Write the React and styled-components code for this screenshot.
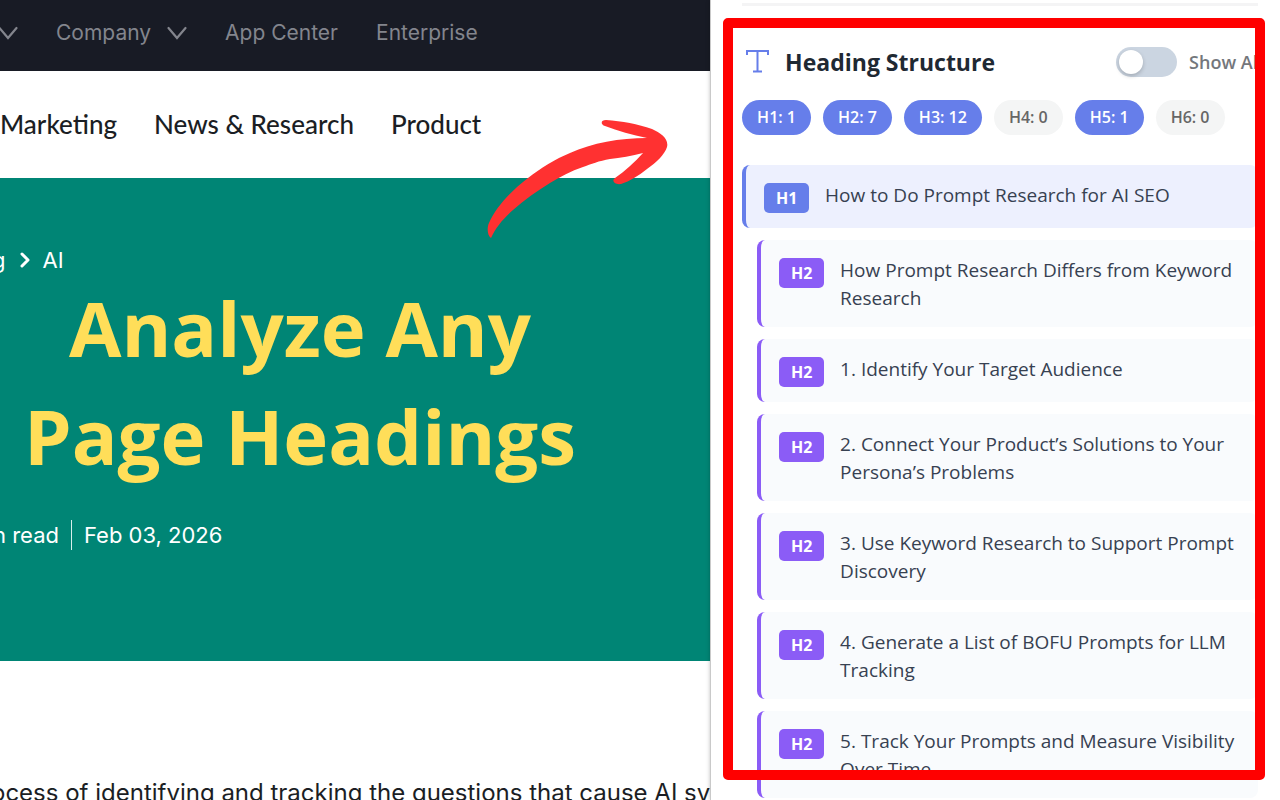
import React, { useState } from 'react';
import styled, { createGlobalStyle } from 'styled-components';

const GlobalStyle = createGlobalStyle`
  * {
    box-sizing: border-box;
  }

  body {
    margin: 0;
    background: #ffffff;
    font-family: Inter, sans-serif;
  }

  h1, h2, p, ul {
    margin: 0;
    padding: 0;
  }

  ul {
    list-style: none;
  }
`;

const Page = styled.div`
  display: grid;
  grid-template-columns: minmax(0, 5fr) minmax(0, 4fr);
  height: 100vh;
  overflow: hidden;
`;

const Article = styled.div`
  position: relative;
  overflow: hidden;
  white-space: nowrap;
`;

const TopBar = styled.nav`
  display: flex;
  align-items: center;
  gap: 38px;
  height: 71px;
  margin-left: -2px;
  padding-bottom: 5px;
  background: #181b25;
`;

const TopLink = styled.a`
  display: flex;
  align-items: center;
  gap: 16px;
  color: #83858d;
  font-size: 21px;
  line-height: 28px;
  text-decoration: none;
`;

const Categories = styled.nav`
  display: flex;
  align-items: center;
  gap: 37px;
  height: 107px;
  padding-bottom: 2px;
`;

const CategoryLink = styled.a`
  color: #1b1e24;
  font-family: Lato, sans-serif;
  font-size: 26px;
  font-weight: 500;
  line-height: 32px;
  text-decoration: none;
`;

const Hero = styled.header`
  height: 483px;
  padding-top: 67px;
  background: #008575;
  color: #ffffff;
`;

const Breadcrumb = styled.div`
  display: flex;
  align-items: center;
  gap: 12px;
  height: 29px;
  margin-left: -8px;
  font-size: 22px;
`;

const Crumb = styled.a`
  color: inherit;
  text-decoration: none;
`;

const Headline = styled.h1`
  width: 600px;
  color: #ffde59;
  font-family: "Open Sans", sans-serif;
  font-size: 76px;
  font-weight: 700;
  line-height: 108px;
  text-align: center;
`;

const Meta = styled.div`
  display: flex;
  align-items: center;
  height: 32px;
  margin: 29px 0 0 -7px;
  font-size: 22px;
`;

const MetaItem = styled.span`
  & + & {
    margin-left: 12px;
    padding-left: 12px;
    border-left: 1px solid #d9efec;
    line-height: 30px;
  }
`;

const Paragraph = styled.p`
  margin: 115px 0 0 -9px;
  color: #1b1e24;
  font-size: 24px;
  line-height: 34px;
`;

const Arrow = styled.svg`
  position: absolute;
  top: 118px;
  left: 486px;
  width: 184px;
  height: 122px;
`;

const Panel = styled.aside`
  position: relative;
  overflow: hidden;
  margin-left: -1px;
  padding: 3px 22px 0 31px;
  border-left: 1px solid #c9c9c9;
  background: #ffffff;
  box-shadow: 0 0 4px rgba(0, 0, 0, 0.25);
  font-family: "Open Sans", sans-serif;
`;

const Divider = styled.hr`
  height: 3px;
  margin: 0;
  border: 0;
  background: #f4f4f5;
`;

const PanelHeader = styled.div`
  display: flex;
  align-items: center;
  height: 34px;
  margin-top: 39px;
  white-space: nowrap;
`;

const PanelTitle = styled.h2`
  display: flex;
  flex: 0 0 374px;
  align-items: center;
  gap: 13px;
  color: #1f2933;
  font-size: 23px;
  font-weight: 700;
`;

const ToggleLabel = styled.label`
  display: flex;
  align-items: center;
  gap: 12px;
  color: #74777c;
  font-size: 18px;
  font-weight: 600;
`;

const Toggle = styled.input`
  flex: none;
  width: 61px;
  height: 30px;
  margin: 0;
  padding: 3px;
  border-radius: 15px;
  appearance: none;
  background: ${(props) => (props.checked ? '#667eea' : '#cbd5e1')};

  &::before {
    content: '';
    display: block;
    width: 24px;
    height: 24px;
    margin-left: ${(props) => (props.checked ? '31px' : '0')};
    border-radius: 50%;
    background: #ffffff;
    box-shadow: 0 2px 4px rgba(0, 0, 0, 0.2);
  }
`;

const Chips = styled.ul`
  display: flex;
  gap: 12px;
  margin-top: 21px;
`;

const Chip = styled.li`
  padding: 0 15px;
  border-radius: 18px;
  background: ${(props) => (props.$active ? '#667eea' : '#f4f5f5')};
  color: ${(props) => (props.$active ? '#ffffff' : '#666666')};
  font-size: 16px;
  font-weight: 600;
  line-height: 35px;
  white-space: nowrap;
`;

const HeadingList = styled.ul`
  display: flex;
  flex-direction: column;
  gap: 12px;
  margin-top: 30px;
`;

const HeadingItem = styled.li`
  display: flex;
  align-items: flex-start;
  gap: 16px;
  margin-left: ${(props) => (props.$level - 1) * 15}px;
  padding: 16px 18px 15px;
  border-left: 4px solid ${(props) => (props.$level === 1 ? '#667eea' : '#8b5cf6')};
  border-radius: 8px;
  background: ${(props) => (props.$level === 1 ? '#edf0fe' : '#f9fbfd')};
`;

const Badge = styled.span`
  flex: none;
  width: 45px;
  margin-top: 2px;
  border-radius: 5px;
  background: ${(props) => (props.$level === 1 ? '#667eea' : '#8b5cf6')};
  color: #ffffff;
  font-size: 16px;
  font-weight: 700;
  line-height: 30px;
  text-align: center;
`;

const HeadingText = styled.span`
  color: #374151;
  font-size: 19px;
  line-height: 28px;
`;

const Highlight = styled.div`
  position: absolute;
  inset: 18px 15px 20px 12px;
  border: 10px solid #ff0000;
  border-radius: 5px;
  pointer-events: none;
`;

const counts = [
  { tag: 'H1', count: 1 },
  { tag: 'H2', count: 7 },
  { tag: 'H3', count: 12 },
  { tag: 'H4', count: 0 },
  { tag: 'H5', count: 1 },
  { tag: 'H6', count: 0 }
];

const headings = [
  { level: 1, text: 'How to Do Prompt Research for AI SEO' },
  { level: 2, text: 'How Prompt Research Differs from Keyword Research' },
  { level: 2, text: '1. Identify Your Target Audience' },
  { level: 2, text: '2. Connect Your Product’s Solutions to Your Persona’s Problems' },
  { level: 2, text: '3. Use Keyword Research to Support Prompt Discovery' },
  { level: 2, text: '4. Generate a List of BOFU Prompts for LLM Tracking' },
  { level: 2, text: '5. Track Your Prompts and Measure Visibility Over Time' }
];

const ChevronDown = () => (
  <svg width="20" height="14" viewBox="0 0 20 14" fill="none" stroke="#83858d" strokeWidth="2.2">
    <path d="M1.500 2 L10 12 L18.500 2" strokeLinecap="round" />
  </svg>
);

const ChevronRight = () => (
  <svg width="13" height="16" viewBox="0 0 13 16" fill="none" stroke="#ffffff" strokeWidth="3">
    <path d="M4 2 L10 8 L4 14" strokeLinecap="round" strokeLinejoin="round" />
  </svg>
);

const TypeIcon = () => (
  <svg width="30" height="26" viewBox="0 0 30 26" fill="none" stroke="#667eea" strokeWidth="2">
    <path d="M5 6 V2 H26 V6 M15.500 2 V22 M11 22.500 H20" />
  </svg>
);

const App = () => {
  const [showAll, setShowAll] = useState(false);

  return (
    <>
      <GlobalStyle />
      <Page>
        <Article>
          <TopBar>
            <TopLink href="#menu" aria-label="Menu"><ChevronDown /></TopLink>
            <TopLink href="#company">Company <ChevronDown /></TopLink>
            <TopLink href="#apps">App Center</TopLink>
            <TopLink href="#enterprise">Enterprise</TopLink>
          </TopBar>
          <Categories>
            <CategoryLink href="#marketing">Marketing</CategoryLink>
            <CategoryLink href="#news">News &amp; Research</CategoryLink>
            <CategoryLink href="#product">Product</CategoryLink>
          </Categories>
          <Hero>
            <Breadcrumb>
              <Crumb href="#blog">g</Crumb>
              <ChevronRight />
              <Crumb href="#ai">AI</Crumb>
            </Breadcrumb>
            <Headline>
              Analyze Any
              <br />
              Page Headings
            </Headline>
            <Meta>
              <MetaItem>n read</MetaItem>
              <MetaItem>Feb 03, 2026</MetaItem>
            </Meta>
          </Hero>
          <Paragraph>ocess of identifying and tracking the questions that cause AI sy</Paragraph>
          <Arrow viewBox="486 118 184 122" fill="#ff3131">
            <path d="M491 238 C487 235 487 227 489 223 C496 207 511 191 528 178 C541 168 555 159 570 153 C592 143 620 138 647 138 C632 135 618 131 605 126 C600 124 601 120 606 120 C622 121 638 124 652 129 C661 133 669 139 667 147 C665 154 656 163 647 169 C638 176 630 181 621 184 C615 185 611 181 615 178 C625 171 635 162 643 153 C632 156 620 158 610 159 C599 161 591 164 583 167 C571 171 560 177 550 183 C537 191 524 200 513 210 C503 219 496 227 491 238 Z" />
          </Arrow>
        </Article>
        <Panel>
          <Divider />
          <PanelHeader>
            <PanelTitle><TypeIcon />Heading Structure</PanelTitle>
            <ToggleLabel>
              <Toggle
                type="checkbox"
                checked={showAll}
                onChange={() => setShowAll(!showAll)}
              />
              Show All
            </ToggleLabel>
          </PanelHeader>
          <Chips>
            {counts.map(({ tag, count }) => (
              <Chip key={tag} $active={count > 0}>{tag}: {count}</Chip>
            ))}
          </Chips>
          <HeadingList>
            {headings.map(({ level, text }) => (
              <HeadingItem key={text} $level={level}>
                <Badge $level={level}>H{level}</Badge>
                <HeadingText>{text}</HeadingText>
              </HeadingItem>
            ))}
          </HeadingList>
          <Highlight />
        </Panel>
      </Page>
    </>
  );
};

export default App;
